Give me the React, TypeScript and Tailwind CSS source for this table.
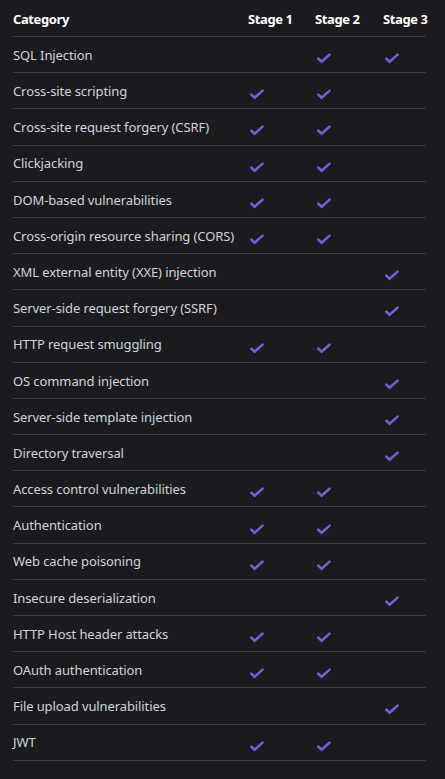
import React from "react";

const rows: [string, boolean, boolean, boolean][] = [
  ["SQL Injection", false, true, true],
  ["Cross-site scripting", true, true, false],
  ["Cross-site request forgery (CSRF)", true, true, false],
  ["Clickjacking", true, true, false],
  ["DOM-based vulnerabilities", true, true, false],
  ["Cross-origin resource sharing (CORS)", true, true, false],
  ["XML external entity (XXE) injection", false, false, true],
  ["Server-side request forgery (SSRF)", false, false, true],
  ["HTTP request smuggling", true, true, false],
  ["OS command injection", false, false, true],
  ["Server-side template injection", false, false, true],
  ["Directory traversal", false, false, true],
  ["Access control vulnerabilities", true, true, false],
  ["Authentication", true, true, false],
  ["Web cache poisoning", true, true, false],
  ["Insecure deserialization", false, false, true],
  ["HTTP Host header attacks", true, true, false],
  ["OAuth authentication", true, true, false],
  ["File upload vulnerabilities", false, false, true],
  ["JWT", true, true, false],
];

function Check() {
  return (
    <svg width="14" height="11" viewBox="0 0 14 11" className="ml-[2px] mt-[6px]">
      <path d="M1.3 5.6 L4.6 8.8 L12.6 1.6" fill="none" stroke="#7b5bd6" strokeWidth="2.6" strokeLinecap="round" strokeLinejoin="miter" />
    </svg>
  );
}

export default function App() {
  return (
    <div className="min-h-[779px] w-[445px] bg-[#1a1b1f] pl-[13px] pr-[19px] pt-0" style={{ fontFamily: '"Noto Sans", "Open Sans", sans-serif' }}>
      <div className="grid grid-cols-[1fr_67px_68px_43px] h-[37px] items-center border-b border-[#3b3b41] pt-[3px] text-[13px] font-bold tracking-[-0.4px] whitespace-nowrap text-white">
        <div>Category</div>
        <div>Stage 1</div>
        <div>Stage 2</div>
        <div>Stage 3</div>
      </div>
      {rows.map(([name, a, b, c]) => (
        <div key={name} className="grid grid-cols-[1fr_67px_68px_43px] h-[36.2px] items-center border-b border-[#3b3b41] pt-[2px] text-[13px] tracking-[-0.1px] text-[#d2d3da]">
          <div>{name}</div>
          <div>{a && <Check />}</div>
          <div>{b && <Check />}</div>
          <div>{c && <Check />}</div>
        </div>
      ))}
    </div>
  );
}
